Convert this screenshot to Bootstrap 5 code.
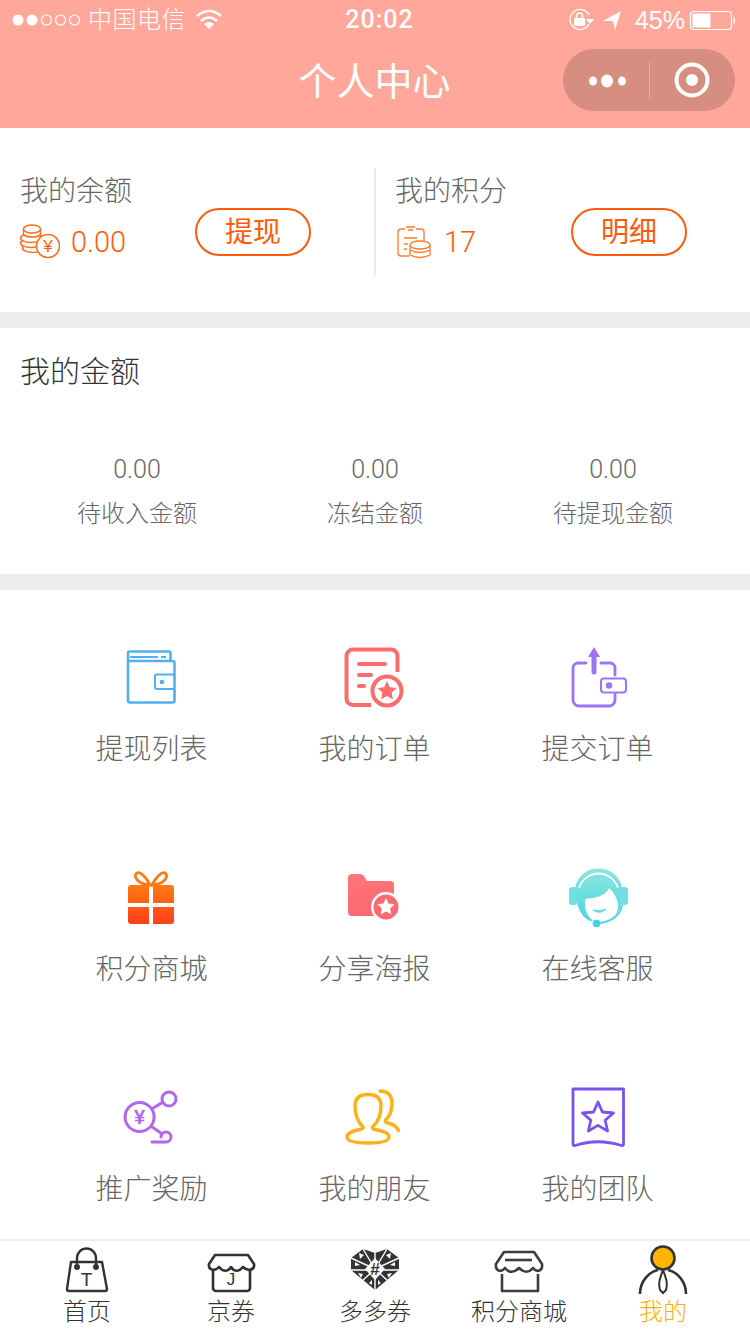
<!DOCTYPE html>
<html lang="zh-CN">
<head>
    <meta charset="UTF-8">
    <meta name="viewport" content="width=device-width, initial-scale=1.0">
    <title>个人中心</title>
    <link href="https://cdn.jsdelivr.net/npm/bootstrap@5.3.0/dist/css/bootstrap.min.css" rel="stylesheet">
    <style>
        html, body { width: 750px; height: 1334px; overflow: hidden; }
        body {
            font-family: "Liberation Sans", "Noto Sans CJK SC", sans-serif;
            font-weight: 300;
            color: #666;
            background: #fff;
        }
        svg { display: block; }
        .app-head { height: 128px; background: #ffa79a; color: #fff; }
        .status-bar { height: 40px; padding: 0 15px 0 12px; font-size: 24px; line-height: 40px; display: grid; grid-template-columns: 1fr auto 1fr; }
        .status-carrier { letter-spacing: .5px; }
        .status-time { font-family: Roboto, sans-serif; font-weight: 500; font-size: 25px; letter-spacing: 1px; padding-left: 12px; }
        .status-pct { font-size: 25px; margin-right: -1px; }
        .title-bar { height: 88px; display: grid; grid-template-columns: 1fr auto 1fr; }
        .title-text { font-size: 38px; font-weight: 400; line-height: 84px; margin-left: -1px; }
        .capsule { width: 172px; height: 62px; margin: 9px 15px 0 0; border-radius: 31px; background: #d68e80; }
        .capsule-line { width: 1px; height: 37px; background: #e6ab9f; }
        .balance-box { height: 184px; padding-top: 40px; }
        .balance-col { width: 375px; height: 108px; padding: 0 64px 0 20px; }
        .balance-col + .balance-col { border-left: 2px solid #ececec; margin-left: -1px; padding: 0 62px 0 19px; }
        .balance-name { font-size: 28px; line-height: 44px; margin-top: 2px; color: #666; }
        .balance-num { font-family: Roboto, "Noto Sans CJK SC", sans-serif; font-size: 29px; line-height: 44px; color: #ff5a0a; margin-top: 6px; gap: 11px; }
        .balance-btn {
            width: 116px; height: 48px; margin-top: 40px; padding: 1px 0 0;
            border: 2px solid #ff5a0a; border-radius: 24px;
            font-size: 28px; line-height: 42px; font-weight: 400; color: #ff5a0a; background: #fff;
        }
        .gray-gap { height: 16px; background: #eee; }
        .money-box { height: 246px; padding-top: 24px; }
        .money-title { font-size: 30px; line-height: 40px; color: #333; padding-left: 20px; }
        .money-cols { margin: 58px 18px 0 18px; }
        .money-val { font-family: Roboto, sans-serif; font-size: 25px; line-height: 40px; color: #666; }
        .money-name { font-size: 24px; line-height: 40px; margin-top: 4px; color: #666; }
        .menu-box { padding: 50px 41px 0 40px; height: 649px; }
        .menu-cell { height: 220px; }
        .menu-name { font-size: 28px; line-height: 40px; margin-top: 20px; color: #666; }
        .tab-bar { height: 95px; border-top: 2px solid #eee; padding: 0 15px; background: #fff; }
        .tab-item { width: 144px; }
        .tab-name { font-size: 24px; line-height: 30px; color: #333; white-space: nowrap; }
        .tab-on { color: #ffb000; }
    </style>
</head>
<body class="d-flex flex-column">

<header class="app-head">
    <div class="status-bar">
        <div class="d-flex align-items-center">
            <svg width="72" height="40" viewBox="12 0 72 40">
                <circle cx="18" cy="20" r="5.5" fill="#fff"/>
                <circle cx="32" cy="20" r="5.5" fill="#fff"/>
                <g fill="none" stroke="#fff" stroke-width="1.2">
                    <circle cx="46.5" cy="20" r="5"/><circle cx="60.5" cy="20" r="5"/><circle cx="74.5" cy="20" r="5"/>
                </g>
            </svg>
            <span class="ms-1 status-carrier">中国电信</span>
            <svg class="ms-2" width="30" height="40" viewBox="195 0 30 40" fill="none" stroke="#fff" stroke-width="2.6">
                <path d="M198 16 Q210 6 222 16"/><path d="M202 21 Q210 14 218 21"/>
                <path d="M205 24 L210 29 L215 24 Q210 20 205 24Z" fill="#fff" stroke="none"/>
            </svg>
        </div>
        <div class="status-time">20:02</div>
        <div class="d-flex align-items-center justify-content-end">
            <svg width="60" height="40" viewBox="568 0 60 40">
                <path d="M590 24 A10 10 0 1 1 590 15" fill="none" stroke="#fff" stroke-width="1.3"/>
                <path d="M587 19 H595 L591 24Z" fill="#fff"/>
                <rect x="575" y="18" width="11" height="8" rx="1" fill="#fff"/>
                <path d="M577.5 18 V16 a3 3 0 0 1 6 0 V18" fill="none" stroke="#fff" stroke-width="1.5"/>
                <path d="M604 21 L622 11 L616 30 L614 21Z" fill="#fff"/>
            </svg>
            <span class="status-pct ms-2">45%</span>
            <svg class="ms-1" width="47" height="40" viewBox="688 0 47 40">
                <rect x="690.5" y="11.5" width="41" height="18" rx="3" fill="none" stroke="#fff" stroke-width="1.2"/>
                <rect x="692.5" y="13.5" width="18" height="14" fill="#fff"/>
                <path d="M733.5 17 a4 4 0 0 1 0 7Z" fill="#fff"/>
            </svg>
        </div>
    </div>
    <div class="title-bar">
        <div></div>
        <div class="title-text">个人中心</div>
        <div class="d-flex justify-content-end">
            <div class="capsule d-flex align-items-center">
                <svg width="86" height="62" viewBox="563 49 86 62" fill="#fff">
                    <ellipse cx="593" cy="81" rx="4" ry="4.5"/><ellipse cx="607" cy="81" rx="6" ry="6.5"/><ellipse cx="622" cy="81" rx="4" ry="4.5"/>
                </svg>
                <div class="capsule-line"></div>
                <svg width="85" height="62" viewBox="650 49 85 62">
                    <circle cx="692" cy="80" r="15.5" fill="none" stroke="#fff" stroke-width="4"/>
                    <circle cx="692" cy="80" r="6" fill="#fff"/>
                </svg>
            </div>
        </div>
    </div>
</header>

<section class="balance-box d-flex">
    <div class="balance-col d-flex justify-content-between">
        <div>
            <div class="balance-name">我的余额</div>
            <div class="balance-num d-flex align-items-center">
                <svg width="40" height="40" viewBox="20 224 40 40" fill="#fff" stroke="#ff6a1a" stroke-width="1.5">
                    <ellipse cx="33" cy="250" rx="10.5" ry="4.5"/>
                    <ellipse cx="31" cy="245" rx="10.5" ry="4.5"/>
                    <ellipse cx="31" cy="240" rx="10.5" ry="4.5"/>
                    <path d="M23.5 231.5 V237 Q32 241.5 40.5 237 V231.5"/>
                    <ellipse cx="32" cy="231" rx="8.5" ry="4"/>
                    <circle cx="48" cy="248" r="11.5"/>
                    <text x="48" y="254" text-anchor="middle" font-size="17" font-family="Liberation Sans" fill="#ff5a0a" stroke="none">¥</text>
                </svg>
                <span>0.00</span>
            </div>
        </div>
        <button type="button" class="btn balance-btn">提现</button>
    </div>
    <div class="balance-col d-flex justify-content-between">
        <div>
            <div class="balance-name">我的积分</div>
            <div class="balance-num d-flex align-items-center">
                <svg width="38" height="40" viewBox="396 224 38 40" fill="none" stroke="#ff7a2a" stroke-width="1.3">
                    <path d="M406 231 H402 a3 3 0 0 0 -3 3 V255 a3 3 0 0 0 3 3 H410"/>
                    <path d="M417 231 H422 a3 3 0 0 1 3 3 V243"/>
                    <path d="M407 229 H416 M409 232 H414 M405 240 H418 M405 246 H409 M405 251 H408"/>
                    <ellipse cx="421" cy="247" rx="10" ry="4" fill="#fff"/>
                    <path d="M411 247 V257 Q421 262 431 257 V247"/>
                    <path d="M411 252 Q421 257 431 252"/>
                </svg>
                <span>17</span>
            </div>
        </div>
        <button type="button" class="btn balance-btn">明细</button>
    </div>
</section>

<div class="gray-gap"></div>

<section class="money-box">
    <div class="money-title">我的金额</div>
    <div class="row g-0 text-center money-cols">
        <div class="col-4"><div class="money-val">0.00</div><div class="money-name">待收入金额</div></div>
        <div class="col-4"><div class="money-val">0.00</div><div class="money-name">冻结金额</div></div>
        <div class="col-4"><div class="money-val">0.00</div><div class="money-name">待提现金额</div></div>
    </div>
</section>

<div class="gray-gap"></div>

<section class="menu-box">
    <div class="row g-0 text-center">
        <div class="col-4 menu-cell d-flex flex-column align-items-center">
            <svg width="70" height="70" viewBox="117 640 70 70" fill="none" stroke="#4fb2ee" stroke-width="2.6" stroke-linejoin="round">
                <path d="M128 661 V653 a1.5 1.5 0 0 1 1.5 -1.5 H169 a1.5 1.5 0 0 1 1.5 1.5 V661"/>
                <rect x="128" y="661" width="46.5" height="41.5" rx="2"/>
                <path d="M130 657 H158 M161 657 H166" stroke-width="2"/>
                <path d="M174 674.5 H157 a2 2 0 0 0 -2 2 V687 a2 2 0 0 0 2 2 H174" stroke-width="2"/>
                <circle cx="162" cy="682" r="2.3" fill="#4fb2ee" stroke="none"/>
            </svg>
            <div class="menu-name">提现列表</div>
        </div>
        <div class="col-4 menu-cell d-flex flex-column align-items-center">
            <svg width="70" height="70" viewBox="340 640 70 70" fill="none" stroke="#fb6c6c" stroke-width="4" stroke-linecap="round">
                <path d="M371 705 H353 a6.5 6.5 0 0 1 -6.5 -6.5 V656 a6.5 6.5 0 0 1 6.5 -6.5 H391 a6.5 6.5 0 0 1 6.5 6.5 V672" stroke-linecap="butt"/>
                <path d="M359 664 H385 M359 675 H371 M359 686 H364"/>
                <circle cx="387" cy="691" r="14.5"/>
                <path d="M387 681 L389.8 687.2 L396.5 688 L391.6 692.6 L392.9 699.3 L387 696 L381.1 699.3 L382.4 692.6 L377.5 688 L384.2 687.2Z" fill="#fb6c6c" stroke="none"/>
            </svg>
            <div class="menu-name">我的订单</div>
        </div>
        <div class="col-4 menu-cell d-flex flex-column align-items-center">
            <svg width="70" height="70" viewBox="563 640 70 70" fill="none" stroke="#9b74fb" stroke-width="2.8" stroke-linecap="round">
                <path d="M586 663 H578 a5 5 0 0 0 -5 5 V700 a6 6 0 0 0 6 6 H609 a6 6 0 0 0 6 -6 V694"/>
                <path d="M601 663 H610 a5 5 0 0 1 5 5 V675"/>
                <path d="M594 655 V672" stroke-width="5"/>
                <path d="M594 647 L600 657 H588Z" fill="#9b74fb" stroke="none"/>
                <rect x="601" y="678.5" width="25" height="14" rx="3" stroke-width="2"/>
                <circle cx="609" cy="685.5" r="3.2" fill="#9b74fb" stroke="none"/>
            </svg>
            <div class="menu-name">提交订单</div>
        </div>

        <div class="col-4 menu-cell d-flex flex-column align-items-center">
            <svg width="70" height="70" viewBox="117 860 70 70">
                <defs>
                    <linearGradient id="giftFill" x1="0" y1="0" x2="0" y2="1">
                        <stop offset="0" stop-color="#ff7a12"/><stop offset="1" stop-color="#ff3e1a"/>
                    </linearGradient>
                </defs>
                <path d="M128 903 V888 a3 3 0 0 1 3 -3 H149 V903Z M153 885 H171 a3 3 0 0 1 3 3 V903 H153Z M128 907 H149 V924 H131 a3 3 0 0 1 -3 -3Z M153 907 H174 V921 a3 3 0 0 1 -3 3 H153Z" fill="url(#giftFill)"/>
                <g fill="none" stroke="#ff7a12" stroke-width="2.8">
                    <path d="M150 885 C146 877 140 871 137 873 C133 875 136 884 150 885Z"/>
                    <path d="M152 885 C156 877 162 871 165 873 C169 875 166 884 152 885Z"/>
                </g>
            </svg>
            <div class="menu-name">积分商城</div>
        </div>
        <div class="col-4 menu-cell d-flex flex-column align-items-center">
            <svg width="70" height="70" viewBox="340 860 70 70">
                <defs>
                    <linearGradient id="folderFill" x1="0" y1="0" x2="0" y2="1">
                        <stop offset="0" stop-color="#ff747a"/><stop offset="1" stop-color="#fb6a70"/>
                    </linearGradient>
                </defs>
                <path d="M352 874 H360 a5 5 0 0 1 4.5 3 L367 881 H390 a4 4 0 0 1 4 4 V912 a4 4 0 0 1 -4 4 H352 a4 4 0 0 1 -4 -4 V878 a4 4 0 0 1 4 -4Z" fill="url(#folderFill)"/>
                <circle cx="386" cy="907" r="15" fill="#fff"/>
                <circle cx="386" cy="907" r="12.5" fill="#fb6a70"/>
                <path d="M386 898 L388.6 903.6 L394.6 904.3 L390.2 908.4 L391.4 914.4 L386 911.4 L380.6 914.4 L381.8 908.4 L377.4 904.3 L383.4 903.6Z" fill="#fff"/>
            </svg>
            <div class="menu-name">分享海报</div>
        </div>
        <div class="col-4 menu-cell d-flex flex-column align-items-center">
            <svg width="70" height="70" viewBox="563 860 70 70">
                <defs>
                    <linearGradient id="headFill" x1="0" y1="0" x2="0" y2="1">
                        <stop offset="0" stop-color="#8ce5de"/><stop offset="1" stop-color="#4dd8de"/>
                    </linearGradient>
                </defs>
                <path d="M575 888 C577 876 587 868.5 598.5 868.5 C610 868.5 620 876 622 888 C623 900 621 912 612 918 L590 921 C580 917 575 902 575 888Z" fill="url(#headFill)"/>
                <path d="M579 888 C582 879 590 873.5 598.5 873.5 C607 873.5 615 879 618 888" fill="none" stroke="#fff" stroke-width="1.8"/>
                <rect x="569" y="887" width="8" height="18" rx="3.5" fill="#6fdfdf"/>
                <rect x="620" y="887" width="8" height="18" rx="3.5" fill="#6fdfdf"/>
                <path d="M585 899 C595 898 606 896 609 888 C615 893 619 902 618 908 C617 915 611 921 604 922 H597 C590 921 585 912 585 905Z" fill="#fff"/>
                <path d="M593 910 Q600 915 606 909 Q600 912 593 910Z" fill="#5bdcde" stroke="#5bdcde" stroke-width="1"/>
                <path d="M597 923 C610 923 620 916 622 905" fill="none" stroke="#4dd8de" stroke-width="2"/>
                <circle cx="596.5" cy="923.5" r="3.8" fill="#3fd4dc"/>
            </svg>
            <div class="menu-name">在线客服</div>
        </div>

        <div class="col-4 menu-cell d-flex flex-column align-items-center">
            <svg width="70" height="70" viewBox="117 1080 70 70" fill="none" stroke="#b066f0" stroke-width="3">
                <circle cx="139.6" cy="1117" r="14.5"/>
                <circle cx="169" cy="1099" r="7"/>
                <path d="M152.5 1108.5 L163 1102"/>
                <path d="M151.5 1126.5 L161.5 1133.5"/>
                <path d="M152 1142 H166 a5 5 0 1 0 -5 -5" stroke-linecap="round"/>
                <text x="139.6" y="1124" text-anchor="middle" font-size="20" font-weight="700" fill="#b066f0" stroke="none" font-family="Liberation Sans">¥</text>
            </svg>
            <div class="menu-name">推广奖励</div>
        </div>
        <div class="col-4 menu-cell d-flex flex-column align-items-center">
            <svg width="70" height="70" viewBox="340 1080 70 70" fill="none" stroke="#ffb014" stroke-width="3.4" stroke-linecap="round">
                <path d="M363 1127 C358 1122 355 1116 355 1106 C355 1098 360 1094.5 368 1094.5 C376 1094.5 381 1098 381 1106 C381 1116 378 1122 372.5 1127 C372 1129 372 1128.5 375 1129.5 C384 1131 389 1133 389 1137 C389 1142 378 1143 368 1143 C357 1143 347 1142 347 1137 C347 1133 352 1131 360 1129.5 C363 1128.5 363.5 1128.5 363 1127Z"/>
                <path d="M380 1091 C389 1091 392 1096 392 1104 C392 1112 390 1116 385.5 1120 C385 1122 386 1122.5 388 1123 C394 1124.5 397 1127 398.5 1130.5"/>
            </svg>
            <div class="menu-name">我的朋友</div>
        </div>
        <div class="col-4 menu-cell d-flex flex-column align-items-center">
            <svg width="70" height="70" viewBox="563 1080 70 70" fill="none" stroke="#7a52f0" stroke-width="2.8" stroke-linejoin="round">
                <path d="M573 1089 H623.5 V1144 a1.5 1.5 0 0 1 -2 1.5 Q598 1138 575 1145.5 a1.5 1.5 0 0 1 -2 -1.5Z"/>
                <path d="M598 1102 L602.4 1112 L613.5 1113 L605.2 1120.3 L607.6 1131 L598 1125.4 L588.4 1131 L590.8 1120.3 L582.5 1113 L593.6 1112Z"/>
            </svg>
            <div class="menu-name">我的团队</div>
        </div>
    </div>
</section>

<nav class="tab-bar d-flex text-center">
    <div class="tab-item d-flex flex-column align-items-center">
        <svg width="64" height="56" viewBox="55 1241 64 56" fill="none" stroke="#333" stroke-width="2.4" stroke-linejoin="round">
            <path d="M71 1262 H102 L107 1289 a2 2 0 0 1 -2 2 H69 a2 2 0 0 1 -2 -2Z"/>
            <path d="M77 1267 V1258 a9.5 9.5 0 0 1 19 0 V1267"/>
            <circle cx="77" cy="1267" r="1.8" fill="#333"/><circle cx="96" cy="1267" r="1.8" fill="#333"/>
            <text x="86.5" y="1286" text-anchor="middle" font-size="19" fill="#333" stroke="none" font-family="Liberation Sans">T</text>
        </svg>
        <div class="tab-name">首页</div>
    </div>
    <div class="tab-item d-flex flex-column align-items-center">
        <svg width="64" height="56" viewBox="199 1241 64 56" fill="none" stroke="#333" stroke-width="2.6" stroke-linejoin="round">
            <path d="M215 1255 H248 L254 1264 C255 1270 248 1272 243 1267 C239 1272 234 1272 231 1267 C228 1272 223 1272 219 1267 C215 1272 208 1270 209 1264Z"/>
            <path d="M213 1270 V1288 a3 3 0 0 0 3 3 H247 a3 3 0 0 0 3 -3 V1270"/>
            <text x="231" y="1285" text-anchor="middle" font-size="17" fill="#333" stroke="none" font-family="Liberation Sans">J</text>
        </svg>
        <div class="tab-name">京券</div>
    </div>
    <div class="tab-item d-flex flex-column align-items-center">
        <svg width="64" height="56" viewBox="343 1241 64 56">
            <path d="M351 1258 L363 1249 L375 1253 L387 1249 L399 1258 V1270 L375 1290 L351 1270Z" fill="#333"/>
            <g stroke="#fff" stroke-width="1.4">
                <path d="M351 1258 L375 1269 L399 1258 M351 1270 H399 M363 1249 L375 1269 L387 1249 M375 1253 V1290 M362 1281 L375 1269 L388 1281" fill="none"/>
            </g>
            <path d="M365 1269 L375 1258 L385 1269 L375 1280Z" fill="#fff"/>
            <g fill="#fff">
                <path d="M359 1253 l5 2 -4 4Z M391 1253 l-5 2 4 4Z M355 1262 l5 3 -5 1Z M395 1262 l-5 3 5 1Z M358 1273 l5 1 -2 4Z M392 1273 l-5 1 2 4Z M369 1283 l3 -3 v5Z M381 1283 l-3 -3 v5Z"/>
            </g>
            <text x="375" y="1275" text-anchor="middle" font-size="17" font-weight="700" fill="#333" font-family="Liberation Sans">#</text>
        </svg>
        <div class="tab-name">多多券</div>
    </div>
    <div class="tab-item d-flex flex-column align-items-center">
        <svg width="64" height="56" viewBox="487 1241 64 56" fill="none" stroke="#3d3d3d" stroke-width="2.6" stroke-linejoin="round">
            <path d="M504 1252 H534 L542 1264 C543 1271 537 1273 533 1268 C529 1273 524 1273 519 1268 C514 1273 509 1273 505 1268 C501 1273 495 1271 496 1264Z"/>
            <path d="M505 1260 H532"/>
            <path d="M502 1274 V1291 H538 V1274"/>
        </svg>
        <div class="tab-name">积分商城</div>
    </div>
    <div class="tab-item d-flex flex-column align-items-center">
        <svg width="64" height="56" viewBox="631 1241 64 56" fill="none" stroke="#333" stroke-width="2.6">
            <path d="M640 1294 C640 1281 649 1272 658 1270 M686 1294 C686 1281 677 1272 668 1270"/>
            <path d="M663 1270 C660 1278 658 1283 660 1290 L663 1293 L666 1290 C668 1283 666 1278 663 1270Z" stroke-width="2"/>
            <circle cx="663" cy="1258" r="11.5" fill="#ffb400"/>
        </svg>
        <div class="tab-name tab-on">我的</div>
    </div>
</nav>

<script src="https://cdn.jsdelivr.net/npm/bootstrap@5.3.0/dist/js/bootstrap.bundle.min.js"></script>
</body>
</html>
